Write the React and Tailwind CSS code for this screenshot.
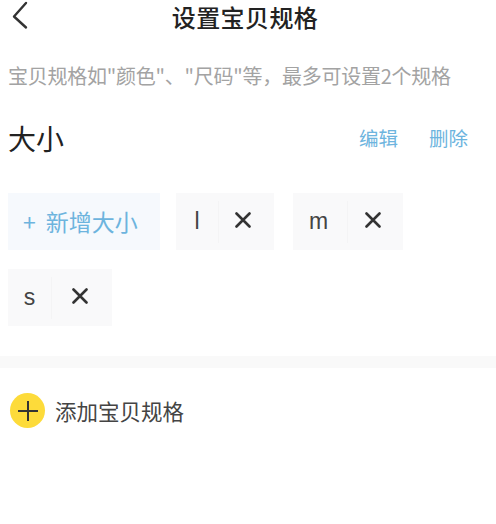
import React from "react";

const font = { fontFamily: '"Noto Sans CJK SC", "Liberation Sans", sans-serif' };

function Chip({ label, labelW, xW, extra, labelExtra }) {
  return (
    <div className={`${extra} flex h-[57px] items-center bg-[#f9f9fa]`}>
      <div className={`${labelW} ${labelExtra} flex h-[42px] items-center justify-center border-r border-[#f4f4f5] text-[23px] text-[#444] font-['Liberation_Sans']`}>{label}</div>
      <div className={`${xW} flex items-center justify-center pb-1`}>
        <svg width="16" height="16" viewBox="0 0 16 16" fill="none" stroke="#333" strokeWidth="2.6" strokeLinecap="round"><path d="M1.500 1.500 14.500 14.500M14.500 1.500 1.500 14.500" /></svg>
      </div>
    </div>
  );
}

export default function App() {
  return (
    <div className="h-[524px] w-[496px] overflow-hidden bg-white" style={font}>
      <header className="relative flex h-[34px] items-center justify-center pr-[6px]">
        <svg className="absolute left-[11px] top-0" width="18" height="30" viewBox="0 0 18 30" fill="none" stroke="#333" strokeWidth="2.4" strokeLinecap="round" strokeLinejoin="round"><path d="M15 3 3 16.500 15 27.500" /></svg>
        <h1 className="text-[24px] leading-none font-medium tracking-[0.4px] text-[#222]">设置宝贝规格</h1>
      </header>
      <p className="mt-[31px] pl-2 text-[20px] leading-[22px] tracking-[-0.25px] text-[#a3a3a3] whitespace-nowrap">宝贝规格如"颜色"、"尺码"等，最多可设置2个规格</p>
      <div className="mt-[33px] flex h-[36px] items-center pl-2 pr-[28px]">
        <h2 className="text-[28px] leading-none text-[#222]">大小</h2>
        <div className="ml-auto flex gap-[31px] text-[19.500px] leading-none text-[#6db4de]">
          <span>编辑</span>
          <span>删除</span>
        </div>
      </div>
      <div className="mt-[37px] flex flex-wrap gap-x-4 gap-y-[19px] pl-2 pr-20">
        <div className="flex h-[57px] w-[152px] items-center gap-[10px] bg-[#f6f9fd] pl-[15px] text-[23px] text-[#6db4de]">
          <span>+</span>
          <span>新增大小</span>
        </div>
        <Chip label="l" labelW="w-[43px]" xW="w-[47px]" extra="pr-[8px] mr-[3px]" labelExtra="" />
        <Chip label="m" labelW="w-[55px]" xW="w-[50px]" extra="pr-[5px]" labelExtra="pr-[3px]" />
        <Chip label="s" labelW="w-[44px]" xW="w-[56px]" extra="pr-[4px]" labelExtra="" />
      </div>
      <div className="mt-[30px] h-[12px] bg-[#f9f9f9]" />
      <div className="mt-[25px] flex items-center pl-[10px]">
        <div className="flex h-[35px] w-[35px] items-center justify-center rounded-full bg-[#fddb3a]">
          <svg width="22" height="22" viewBox="0 0 22 22" fill="none" stroke="#333" strokeWidth="2"><path d="M1 11H21M11 1V21" /></svg>
        </div>
        <span className="ml-[10px] text-[21.500px] leading-none text-[#444]">添加宝贝规格</span>
      </div>
    </div>
  );
}
